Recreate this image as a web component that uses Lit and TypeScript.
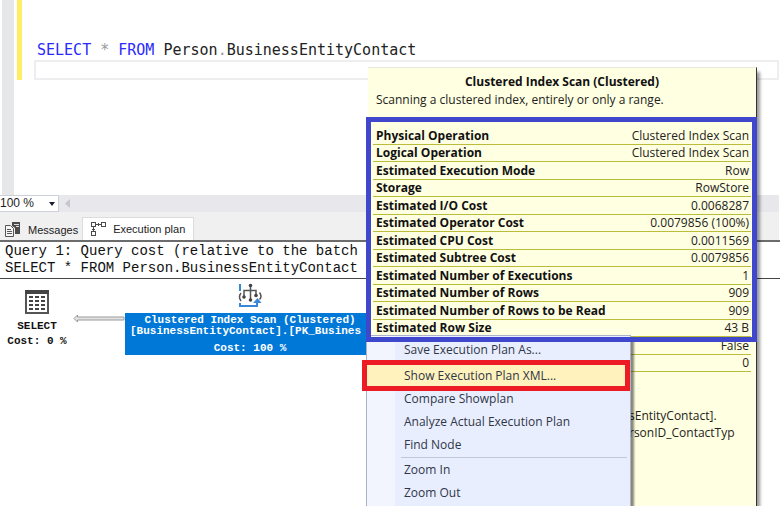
import { LitElement, html, css, svg } from "lit";
import { customElement } from "lit/decorators.js";
import { classMap } from "lit/directives/class-map.js";

const properties: [string, string][] = [
  ["Physical Operation", "Clustered Index Scan"],
  ["Logical Operation", "Clustered Index Scan"],
  ["Estimated Execution Mode", "Row"],
  ["Storage", "RowStore"],
  ["Estimated I/O Cost", "0.0068287"],
  ["Estimated Operator Cost", "0.0079856 (100%)"],
  ["Estimated CPU Cost", "0.0011569"],
  ["Estimated Subtree Cost", "0.0079856"],
  ["Estimated Number of Executions", "1"],
  ["Estimated Number of Rows", "909"],
  ["Estimated Number of Rows to be Read", "909"],
  ["Estimated Row Size", "43 B"],
  ["", "False"],
  ["", "0"],
];

const menuGroups: string[][] = [
  ["Save Execution Plan As..."],
  ["Show Execution Plan XML...", "Compare Showplan", "Analyze Actual Execution Plan", "Find Node"],
  ["Zoom In", "Zoom Out"],
];
const highlighted = "Show Execution Plan XML...";

@customElement("sql-editor")
class SqlEditor extends LitElement {
  static styles = css`
    :host {
      display: flex;
      height: 195px;
      background: #fff;
    }
    .gutter {
      width: 12px;
      margin-left: 2px;
      background: #e6e7e9;
    }
    .changes {
      width: 5px;
      height: 80px;
      margin-left: 3px;
      background: #ffee62;
    }
    .code {
      flex: 1;
      margin: 40px 1px 0 12px;
      font: 15px/20px "DejaVu Sans Mono", monospace;
      color: #222;
      white-space: nowrap;
    }
    .line {
      padding-left: 3px;
    }
    .current {
      height: 16px;
      border: 2px solid #eeeef0;
    }
    .keyword {
      color: #2a2aff;
    }
    .operator {
      color: #9a9a9a;
    }
  `;
  render() {
    return html`
      <div class="gutter"></div>
      <div class="changes"></div>
      <div class="code">
        <div class="line"><span class="keyword">SELECT</span> <span class="operator">*</span> <span class="keyword">FROM</span> Person<span class="operator">.</span>BusinessEntityContact</div>
        <div class="current"></div>
      </div>
    `;
  }
}

@customElement("result-tabs")
class ResultTabs extends LitElement {
  static styles = css`
    :host {
      display: block;
      font: 12px/16px "Liberation Sans", sans-serif;
    }
    .zoombar {
      display: flex;
      align-items: center;
      height: 17px;
      margin-right: 1px;
      background: #e7e7ec;
    }
    .combo {
      display: grid;
      width: 59px;
      height: 17px;
      box-sizing: border-box;
      align-items: center;
      border: 1px solid #ccd0dc;
      border-left: 0;
      background: #fff;
    }
    .combo select,
    .combo svg {
      grid-area: 1 / 1;
    }
    .combo select {
      appearance: none;
      width: 100%;
      height: 15px;
      padding: 0;
      border: 0;
      background: none;
      color: #1d1d1d;
      font: inherit;
      line-height: 15px;
    }
    .combo svg {
      justify-self: end;
      margin-right: 3px;
      pointer-events: none;
    }
    .back {
      margin-left: 6px;
    }
    .tabs {
      display: flex;
      align-items: flex-end;
      height: 28px;
      margin-right: 1px;
      background: #f0f0f0;
    }
    .tab {
      display: flex;
      align-items: center;
      gap: 7px;
      box-sizing: border-box;
      height: 21px;
      padding: 0 4px 0 5px;
      border: 0;
      background: none;
      color: #222;
      font: inherit;
      font-size: 11px;
      white-space: nowrap;
    }
    .tab.active {
      height: 23px;
      padding: 0 8px;
      border: 1px solid #dcdcdc;
      border-bottom: 0;
      background: #fff;
    }
    svg {
      display: block;
    }
  `;
  render() {
    return html`
      <div class="zoombar">
        <label class="combo">
          <select aria-label="Zoom">
            <option>100 %</option>
          </select>
          <svg width="6" height="4"><path d="M0 0h6L3 4z" fill="#1b1b3a" /></svg>
        </label>
        <svg class="back" width="6" height="9"><path d="M5 0v9L0 4.500z" fill="#c6c7cd" /></svg>
      </div>
      <div class="tabs" role="tablist">
        <button class="tab" role="tab">
          <svg width="16" height="15" viewBox="0 0 16 15" fill="none" stroke="#555">
            <path d="M.5 3.500h5l3 3v8h-8z" fill="#f6f6f6" />
            <path d="M2 7.500h4M2 9.500h5M2 11.500h5" />
            <path d="M7 0h8v12h-5V6L7 4z" fill="#4c4c4c" stroke="none" />
            <path d="M9 2.500h5M11 4.500h3" stroke="#ddd" />
          </svg>
          Messages
        </button>
        <button class="tab active" role="tab" aria-selected="true">
          <svg width="15" height="16" viewBox="0 0 15 16" fill="none" stroke="#4a4a4a">
            <rect x=".5" y="1.500" width="4" height="4" />
            <rect x="10.500" y="1.500" width="4" height="4" />
            <rect x=".5" y="10.500" width="4" height="4" />
            <path d="M5 3.500h5M7.500 2v3M2.500 6v4M1 8.500h3" />
          </svg>
          Execution plan
        </button>
      </div>
    `;
  }
}

@customElement("plan-canvas")
class PlanCanvas extends LitElement {
  static styles = css`
    :host {
      display: block;
      flex: 1;
      background: #fff;
      color: #111;
      font-family: "Liberation Mono", monospace;
    }
    .query {
      padding: 1px 5px;
      border-top: 2px solid #6c6c6c;
      border-bottom: 1px solid #444;
      font-size: 14px;
      line-height: 17px;
      white-space: nowrap;
    }
    .diagram {
      display: flex;
      align-items: flex-start;
      padding: 4px 0 0 6px;
      font-size: 11px;
      font-weight: bold;
      line-height: 12px;
      white-space: nowrap;
    }
    .node {
      display: flex;
      flex-direction: column;
      align-items: center;
    }
    .select {
      width: 62px;
      padding-top: 7px;
    }
    .title {
      margin: 6px 0 3px;
    }
    .arrow {
      margin: 31px 0 0 5px;
    }
    .scan {
      width: 250px;
    }
    .label {
      box-sizing: border-box;
      width: 100%;
      height: 42px;
      margin-top: 5px;
      padding: 2px 5px;
      background: #0078d7;
      color: #fff;
      text-align: center;
      line-height: 11px;
    }
    .index {
      text-align: left;
    }
    .cost {
      margin-top: 6px;
    }
    svg {
      display: block;
    }
  `;
  render() {
    const cells = [6, 10, 14, 18].map((y) =>
      [4, 10, 16].map((x) => svg`<path d=${`M${x} ${y + 1}h4`} stroke="#444" stroke-width="2" />`)
    );
    return html`
      <div class="query">
        <div>Query 1: Query cost (relative to the batch</div>
        <div>SELECT * FROM Person.BusinessEntityContact</div>
      </div>
      <div class="diagram">
        <div class="node select">
          <svg width="24" height="24" viewBox="0 0 24 24">
            <rect x="1" y="1" width="22" height="22" fill="#fff" stroke="#555" stroke-width="2" />
            <path d="M0 0h24v4H0z" fill="#444" />
            ${cells}
          </svg>
          <div class="title">SELECT</div>
          <div>Cost: 0 %</div>
        </div>
        <svg class="arrow" width="52" height="9" viewBox="0 0 52 9">
          <path d="M1 4.500L4.500 1v2H51v3H4.500v2z" fill="#e4e4e4" stroke="#9a9a9a" />
        </svg>
        <div class="node scan">
          <svg width="24" height="25" viewBox="0 0 24 25" fill="none">
            <path d="M2 1v7M2 20v3h17v-4" stroke="#3a86d8" stroke-width="2" />
            <path d="M15 20l4.500-5 4 5z" fill="#3a86d8" />
            <path d="M12.500 3v14M6 14V7.500h12V13" stroke="#555" stroke-width="1.500" />
            <circle cx="12.500" cy="2.500" r="1.800" fill="#444" />
            <circle cx="12.500" cy="17" r="1.800" fill="#444" />
            <circle cx="6" cy="14" r="1.800" fill="#444" />
            <circle cx="18" cy="12.500" r="1.800" fill="#444" />
            <path d="M3 10q-3 4 0 8M21.500 9.500q3 4 0 7" stroke="#555" stroke-width="1.500" />
          </svg>
          <div class="label">
            <div>Clustered Index Scan (Clustered)</div>
            <div class="index">[BusinessEntityContact].[PK_Busines</div>
            <div class="cost">Cost: 100 %</div>
          </div>
        </div>
      </div>
    `;
  }
}

@customElement("operator-tooltip")
class OperatorTooltip extends LitElement {
  static styles = css`
    :host {
      display: block;
      box-sizing: border-box;
      padding: 5px 5px 0;
      border-top: 1px solid #e8e8dc;
      border-right: 1px solid #333;
      background: #ffffe1;
      box-shadow: 3px 5px 3px #0006;
      color: #222;
      font: 12px/18px "Open Sans", sans-serif;
    }
    .heading {
      margin: 0;
      color: #111;
      font-size: 12px;
      line-height: 18px;
      text-align: center;
    }
    .about {
      margin: 0 3px 18px;
    }
    table {
      width: 100%;
      border-collapse: collapse;
    }
    th,
    td {
      height: 16px;
      padding: 0 2px 0 3px;
      border-bottom: 1px solid #bcbc3c;
      line-height: 16px;
      white-space: nowrap;
    }
    tr:nth-child(odd) > * {
      height: 17px;
    }
    th {
      color: #111;
      text-align: left;
    }
    td {
      text-align: right;
    }
    .object {
      margin: 35px 0 0 256px;
      line-height: 17px;
    }
    .frame {
      position: absolute;
      inset: 49px -1px auto -2px;
      height: 215px;
      border: 5px solid #3f48cc;
      pointer-events: none;
    }
  `;
  render() {
    return html`
      <h2 class="heading">Clustered Index Scan (Clustered)</h2>
      <p class="about">Scanning a clustered index, entirely or only a range.</p>
      <table>
        ${properties.map(([name, value]) => html`<tr><th scope="row">${name}</th><td>${value}</td></tr>`)}
      </table>
      <div class="object">
        <div>sEntityContact].</div>
        <div>rsonID_ContactTyp</div>
      </div>
      <slot></slot>
      <div class="frame"></div>
    `;
  }
}

@customElement("plan-menu")
class PlanMenu extends LitElement {
  static styles = css`
    :host {
      display: block;
      box-sizing: border-box;
      padding-top: 2px;
      border: 1px solid #a9b2c8;
      border-bottom: 0;
      background: linear-gradient(90deg, #f2f4fe 28px, #e9eeff 28px);
      box-shadow: 3px 3px 2px #0007;
      font: 12px/23px "Open Sans", sans-serif;
    }
    .group + .group {
      margin-top: 3px;
    }
    .group:last-child::before {
      content: "";
      display: block;
      height: 1px;
      margin: -2px 3px 0 34px;
      background: #c3c8d8;
    }
    .item {
      position: relative;
      display: block;
      width: 100%;
      height: 23px;
      padding: 0 0 0 37px;
      border: 0;
      background: none;
      color: #2f3646;
      font: inherit;
      text-align: left;
      white-space: nowrap;
    }
    .marked {
      background: #fff2bd;
    }
    .marked::after {
      content: "";
      position: absolute;
      inset: -4px 0 -4px -5px;
      border: 5px solid #ed1c24;
    }
  `;
  render() {
    return html`
      ${menuGroups.map(
        (group) => html`<div class="group" role="group">
          ${group.map(
            (name) => html`<button role="menuitem" class=${classMap({ item: true, marked: name === highlighted })}>${name}</button>`
          )}
        </div>`
      )}
    `;
  }
}

@customElement("app-root")
class AppRoot extends LitElement {
  static styles = css`
    :host {
      position: relative;
      display: flex;
      flex-direction: column;
      min-height: 100vh;
      overflow: hidden;
      background: #fff;
    }
    .tooltip {
      position: absolute;
      top: 67px;
      bottom: 0;
      left: 368px;
      width: 389px;
    }
    .menu {
      position: absolute;
      top: 267px;
      bottom: 0;
      left: -2px;
      width: 265px;
    }
  `;
  render() {
    return html`
      <sql-editor></sql-editor>
      <result-tabs></result-tabs>
      <plan-canvas></plan-canvas>
      <operator-tooltip class="tooltip" role="tooltip">
        <plan-menu class="menu" role="menu"></plan-menu>
      </operator-tooltip>
    `;
  }
}
